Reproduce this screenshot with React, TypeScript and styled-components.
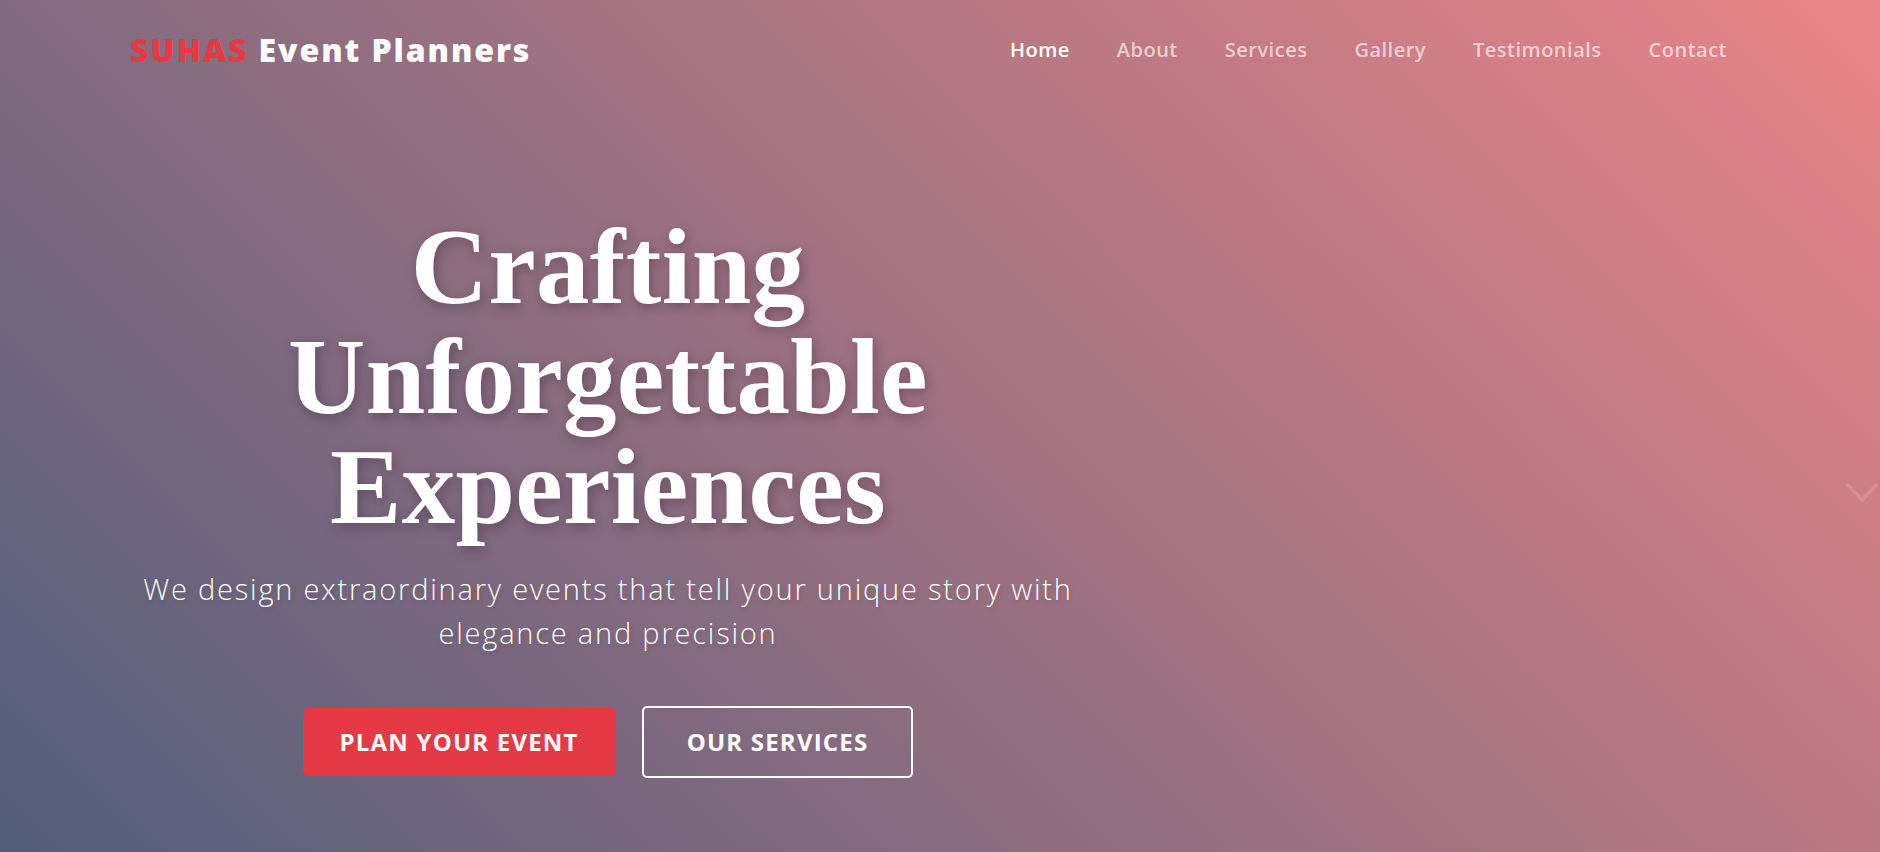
import React from "react";
import styled, { createGlobalStyle } from "styled-components";

const GlobalStyle = createGlobalStyle`
  *, *::before, *::after { box-sizing: border-box; }
  html, body { margin: 0; padding: 0; }
  body {
    font-family: "Open Sans", "Noto Sans", sans-serif;
    overflow: hidden;
  }
`;

const Page = styled.div`
  position: relative;
  width: 1880px;
  height: 852px;
  overflow: hidden;
  display: flex;
  flex-direction: column;
  background: linear-gradient(45deg, #525e7b 0%, #ea8588 100%);
`;

const Header = styled.header`
  display: flex;
  align-items: center;
  justify-content: space-between;
  padding: 32px 153px 0 130px;
`;

const Logo = styled.a`
  font-size: 32px;
  font-weight: 800;
  line-height: 36px;
  letter-spacing: 1.9px;
  color: #ffffff;
  text-decoration: none;
`;

const LogoAccent = styled.span`
  color: #e63946;
`;

const Nav = styled.nav`
  display: flex;
  align-items: center;
  gap: 47px;
`;

const NavLink = styled.a<{ $active?: boolean }>`
  font-size: 20px;
  font-weight: 600;
  line-height: 36px;
  letter-spacing: 0.5px;
  text-decoration: none;
  color: ${(p) => (p.$active ? "#ffffff" : "rgba(255, 255, 255, 0.65)")};
`;

const Hero = styled.section`
  display: grid;
  grid-template-columns: 956px 1fr;
  padding: 144px 0 0 130px;
`;

const HeroContent = styled.div`
  display: flex;
  flex-direction: column;
  align-items: center;
  text-align: center;
`;

const Title = styled.h1`
  margin: 0;
  font-family: "Liberation Serif", "Times New Roman", serif;
  font-weight: 700;
  font-size: 107px;
  line-height: 110px;
  letter-spacing: 0.3px;
  color: #ffffff;
  text-shadow: 2px 4px 12px rgba(40, 20, 40, 0.35);
`;

const Subtitle = styled.p`
  margin: 25px 0 0;
  max-width: 950px;
  font-size: 29px;
  font-weight: 300;
  line-height: 44px;
  letter-spacing: 1.8px;
  color: #ffffff;
  text-shadow: 1px 2px 4px rgba(0, 0, 0, 0.15);
`;

const Actions = styled.div`
  display: flex;
  align-items: center;
  gap: 26px;
  margin-top: 51px;
`;

const Button = styled.a<{ $variant: "primary" | "outline" }>`
  display: inline-flex;
  align-items: center;
  justify-content: center;
  font-size: 24px;
  font-weight: 700;
  line-height: 30px;
  letter-spacing: 1.2px;
  text-transform: uppercase;
  text-decoration: none;
  color: #ffffff;
  border-radius: 5px;
  background: ${(p) => (p.$variant === "primary" ? "#e63946" : "transparent")};
  border: ${(p) => (p.$variant === "primary" ? "none" : "2px solid #ffffff")};
  padding: ${(p) => (p.$variant === "primary" ? "19px 37px" : "19px 43px")};
`;

const ScrollHint = styled.div`
  position: absolute;
  top: 481px;
  left: 1845px;
  width: 36px;
  height: 24px;
  color: rgba(255, 255, 255, 0.14);
`;

export default function App() {
  return (
    <>
      <GlobalStyle />
      <Page>
        <Header>
          <Logo href="#">
            <LogoAccent>SUHAS</LogoAccent> Event Planners
          </Logo>
          <Nav>
            <NavLink $active href="#">Home</NavLink>
            <NavLink href="#">About</NavLink>
            <NavLink href="#">Services</NavLink>
            <NavLink href="#">Gallery</NavLink>
            <NavLink href="#">Testimonials</NavLink>
            <NavLink href="#">Contact</NavLink>
          </Nav>
        </Header>
        <Hero>
          <HeroContent>
            <Title>Crafting Unforgettable Experiences</Title>
            <Subtitle>
              We design extraordinary events that tell your unique story with elegance and precision
            </Subtitle>
            <Actions>
              <Button $variant="primary" href="#">Plan Your Event</Button>
              <Button $variant="outline" href="#">Our Services</Button>
            </Actions>
          </HeroContent>
        </Hero>
        <ScrollHint>
          <svg width="36" height="24" viewBox="0 0 36 24" fill="none">
            <polyline points="3,4 17,19 31,4" stroke="currentColor" strokeWidth="4" strokeLinecap="round" strokeLinejoin="round" />
          </svg>
        </ScrollHint>
      </Page>
    </>
  );
}
